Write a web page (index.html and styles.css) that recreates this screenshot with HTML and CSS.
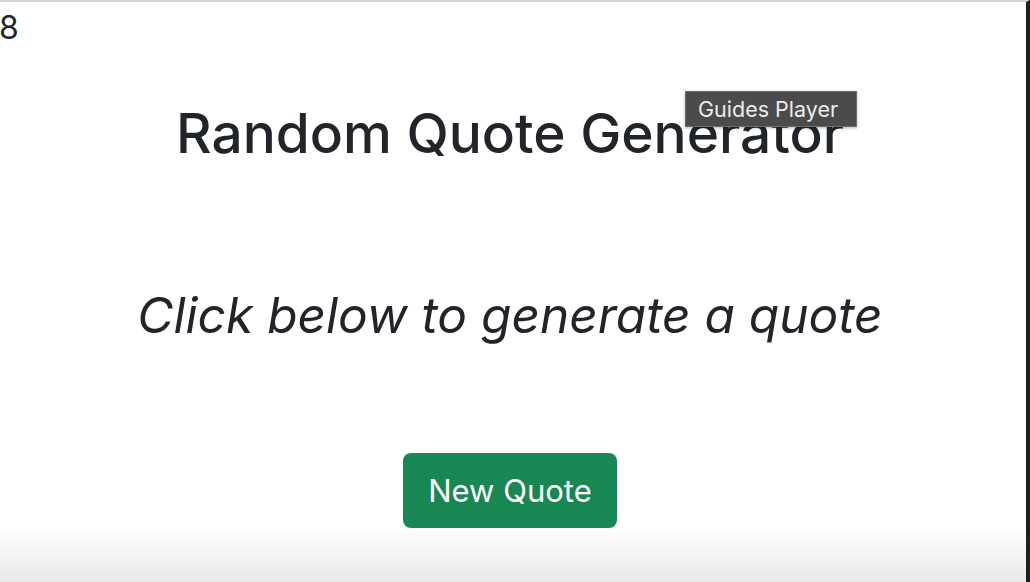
FILE: index.html
```html
<!DOCTYPE html>
<html>
<head>
<meta charset="utf-8">
<link rel="stylesheet" href="styles.css">
</head>
<body>
<div class="frame">
  <div class="counter">8</div>
  <main class="app">
    <h1 class="title">Random Quote Generator</h1>
    <p class="quote">Click below to generate a quote</p>
    <button class="btn">New Quote</button>
  </main>
  <div class="tooltip">Guides Player</div>
</div>
</body>
</html>
```
FILE: styles.css
```css
html, body {
  margin: 0;
  padding: 0;
  height: 100%;
  background: #ffffff;
  overflow: hidden;
}
body {
  font-family: Inter, "Liberation Sans", sans-serif;
  color: #212529;
}
.frame {
  position: relative;
  height: 582px;
  box-sizing: border-box;
  border-top: 2px solid #d6d6d6;
  border-right: 4px solid #1f1f1f;
  background: linear-gradient(to bottom, #ffffff 0, #ffffff 525px, #e8e8e8 582px);
}
.counter {
  font-size: 32px;
  line-height: 1;
  padding-top: 10px;
  margin-left: -1px;
}
.app {
  display: flex;
  flex-direction: column;
  align-items: center;
  padding-top: 56px;
  padding-right: 6px;
}
.title {
  margin: 0;
  font-size: 55px;
  font-weight: 500;
  line-height: 1.2;
}
.quote {
  margin: 120px 0 0;
  font-size: 49.6px;
  font-style: italic;
  line-height: 1.2;
}
.btn {
  margin-top: 107px;
  background: #198754;
  color: #fff;
  border: none;
  border-radius: 8px;
  font-family: inherit;
  font-size: 31px;
  width: 214px;
  height: 75px;
}
.tooltip {
  position: absolute;
  left: 685px;
  top: 89px;
  box-sizing: border-box;
  height: 36px;
  width: 172px;
  background: #4b4b4b;
  border: 1px solid #6e6e6e;
  color: #ececec;
  font-size: 21.5px;
  line-height: 34px;
  padding: 0 0 0 12px;
  white-space: nowrap;
  box-shadow: 0 1px 3px rgba(0,0,0,0.3);
}
```
